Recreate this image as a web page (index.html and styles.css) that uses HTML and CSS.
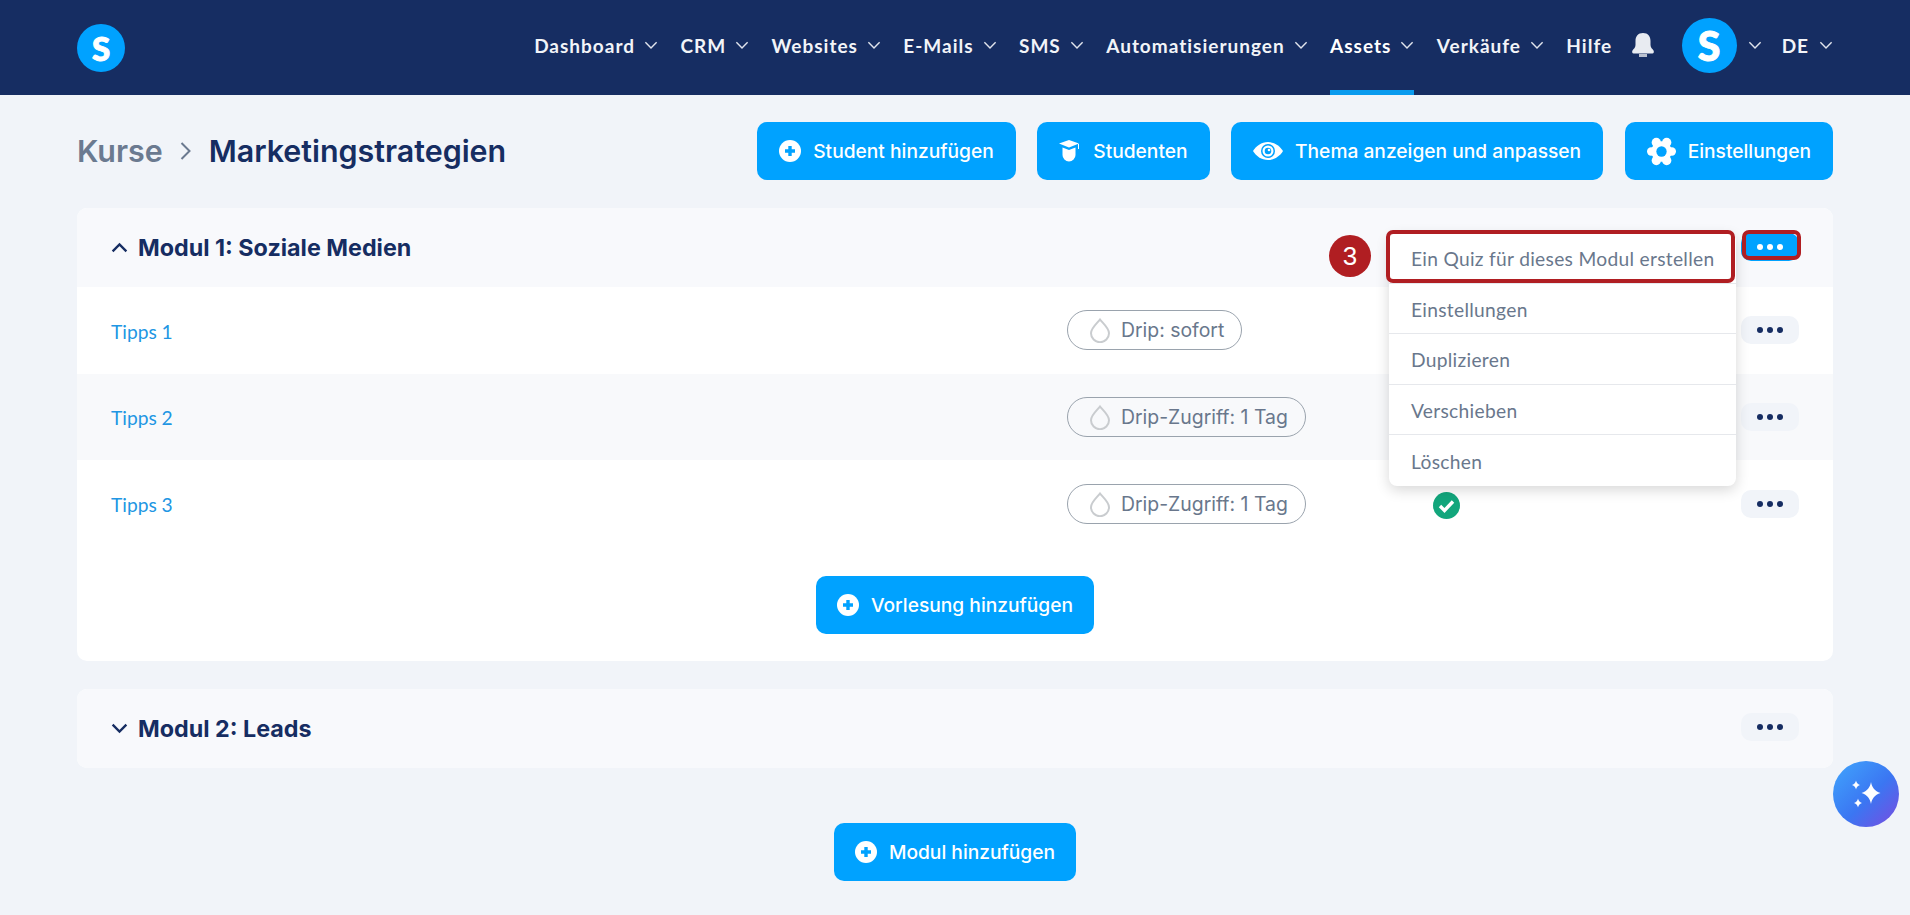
FILE: index.html
```html
<!DOCTYPE html>
<html lang="de">
<head>
    <meta charset="UTF-8">
    <meta name="viewport" content="width=device-width, initial-scale=1.0">
    <title>Marketingstrategien</title>
    <link rel="stylesheet" href="styles.css">
</head>
<body>
    <svg class="sprites" width="0" height="0">
        <symbol id="plus" viewBox="0 0 22 22">
            <circle cx="11" cy="11" r="11" fill="#fff"/>
            <path d="M11 6v10M6 11h10" stroke="#00a2ff" stroke-width="3.4"/>
        </symbol>
        <symbol id="chev" viewBox="0 0 12 8">
            <path d="M1 1.2l5 5 5-5" fill="none" stroke="currentColor"/>
        </symbol>
        <symbol id="drop" viewBox="0 0 24 26">
            <path d="M12 2.5C9 6.5 3 11 3 16.2a9 9 0 0 0 18 0C21 11 15 6.5 12 2.5z" fill="none" stroke="#c9cccf" stroke-width="2"/>
        </symbol>
    </svg>

    <header class="topbar">
        <div class="logo">S</div>
        <nav class="nav">
            <a class="nav-item">Dashboard <svg class="chev"><use href="#chev"/></svg></a>
            <a class="nav-item">CRM <svg class="chev"><use href="#chev"/></svg></a>
            <a class="nav-item">Websites <svg class="chev"><use href="#chev"/></svg></a>
            <a class="nav-item">E-Mails <svg class="chev"><use href="#chev"/></svg></a>
            <a class="nav-item">SMS <svg class="chev"><use href="#chev"/></svg></a>
            <a class="nav-item">Automatisierungen <svg class="chev"><use href="#chev"/></svg></a>
            <a class="nav-item active">Assets <svg class="chev"><use href="#chev"/></svg></a>
            <a class="nav-item">Verkäufe <svg class="chev"><use href="#chev"/></svg></a>
            <a class="nav-item hilfe">Hilfe</a>
            <svg class="bell" viewBox="0 0 22 24">
                <path d="M11 0c5 0 7.500 3.500 7.500 8v4c0 2.500 2 4 3 5.500.6 1 .5 3-1 3H1.500c-1.500 0-1.600-2-1-3C1.500 16 3.500 14.500 3.500 12V8C3.500 3.500 6 0 11 0z" fill="#e8ebf1"/>
                <rect x="7" y="21" width="8" height="3" fill="#b9c0cf"/>
            </svg>
            <div class="avatar">S</div>
            <svg class="chev avatar-chev"><use href="#chev"/></svg>
            <a class="nav-item lang">DE <svg class="chev"><use href="#chev"/></svg></a>
        </nav>
    </header>

    <main class="page">
        <div class="title-row">
            <h1 class="crumbs">
                <span class="crumb-link">Kurse</span>
                <svg class="crumb-sep" viewBox="0 0 12 20"><path d="M1.500 2l8 8-8 8" fill="none" stroke="#6b7a90" stroke-width="2"/></svg>
                <span>Marketingstrategien</span>
            </h1>
            <div class="actions">
                <button class="btn"><svg class="ico"><use href="#plus"/></svg>Student hinzufügen</button>
                <button class="btn">
                    <svg class="ico" viewBox="0 0 22 22">
                        <path d="M10 0l10 3.500-10 4-10-4z" fill="#fff"/>
                        <path d="M19.500 4v5" stroke="#fff" stroke-width="1"/>
                        <path d="M3.500 7.500l6.500 2.500 6.500-2.500v7.500a6.500 6.500 0 0 1-13 0z" fill="#fff"/>
                    </svg>Studenten
                </button>
                <button class="btn">
                    <svg class="ico ico-eye" viewBox="0 0 30 18">
                        <path d="M15 0c6.500 0 12 4 15 9-3 5-8.500 9-15 9S3 14 0 9C3 4 8.500 0 15 0z" fill="#fff"/>
                        <circle cx="15" cy="9" r="7" fill="#00a2ff"/>
                        <circle cx="15" cy="9" r="5.500" fill="#fff"/>
                        <circle cx="15" cy="9" r="3.300" fill="#00a2ff"/>
                        <circle cx="16" cy="8" r="1.300" fill="#fff"/>
                    </svg>Thema anzeigen und anpassen
                </button>
                <button class="btn">
                    <svg class="ico ico-gear" viewBox="0 0 28 28">
                        <g fill="#fff">
                            <circle cx="14" cy="14" r="10"/>
                            <circle cx="24" cy="14" r="4"/>
                            <circle cx="4" cy="14" r="4"/>
                            <circle cx="19" cy="5.300" r="4.500"/>
                            <circle cx="9" cy="5.300" r="4.500"/>
                            <circle cx="19" cy="22.700" r="4.500"/>
                            <circle cx="9" cy="22.700" r="4.500"/>
                        </g>
                        <circle cx="14" cy="14" r="5" fill="#00a2ff"/>
                    </svg>Einstellungen
                </button>
            </div>
        </div>

        <section class="module">
            <div class="module-head">
                <div class="module-title"><svg class="head-chev up"><use href="#chev"/></svg>Modul 1: Soziale Medien</div>
                <button class="dots dots-on"><i></i><i></i><i></i></button>
            </div>
            <div class="row">
                <a class="lesson">Tipps 1</a>
                <div class="status"><span class="pill"><svg class="drop"><use href="#drop"/></svg>Drip: sofort</span></div>
                <span></span>
                <button class="dots"><i></i><i></i><i></i></button>
            </div>
            <div class="row row-alt">
                <a class="lesson">Tipps 2</a>
                <div class="status"><span class="pill"><svg class="drop"><use href="#drop"/></svg>Drip-Zugriff: 1 Tag</span></div>
                <span></span>
                <button class="dots"><i></i><i></i><i></i></button>
            </div>
            <div class="row">
                <a class="lesson">Tipps 3</a>
                <div class="status"><span class="pill"><svg class="drop"><use href="#drop"/></svg>Drip-Zugriff: 1 Tag</span></div>
                <svg class="check" viewBox="0 0 27 27">
                    <circle cx="13.500" cy="13.500" r="13.500" fill="#12a67c"/>
                    <path d="M7 14l4.500 4.500L20 9.500" fill="none" stroke="#fff" stroke-width="3.400"/>
                </svg>
                <button class="dots"><i></i><i></i><i></i></button>
            </div>
            <div class="module-foot">
                <button class="btn btn-add"><svg class="ico"><use href="#plus"/></svg>Vorlesung hinzufügen</button>
            </div>

            <div class="step">3</div>
            <ul class="menu">
                <li>Ein Quiz für dieses Modul erstellen</li>
                <li>Einstellungen</li>
                <li>Duplizieren</li>
                <li>Verschieben</li>
                <li>Löschen</li>
            </ul>
            <div class="mark mark-item"></div>
            <div class="mark mark-dots"></div>
        </section>

        <section class="module">
            <div class="module-head">
                <div class="module-title"><svg class="head-chev"><use href="#chev"/></svg>Modul 2: Leads</div>
                <button class="dots head-dots"><i></i><i></i><i></i></button>
            </div>
        </section>

        <div class="add-row">
            <button class="btn btn-add"><svg class="ico"><use href="#plus"/></svg>Modul hinzufügen</button>
        </div>
    </main>

    <button class="ai">
        <svg viewBox="0 0 32 32" width="32" height="32">
            <path d="M21 4c1 5.500 3.500 9 9.500 11-6 2-8.500 5.500-9.500 11-1-5.500-3.500-9-9.500-11 6-2 8.500-5.500 9.500-11z" fill="#fff"/>
            <path d="M6 2.500c.5 2.500 1.500 3.500 4 4.500-2.500 1-3.500 2-4 4.500-.5-2.500-1.500-3.500-4-4.500 2.500-1 3.500-2 4-4.500z" fill="#fff"/>
            <path d="M8 20.500c.5 2.500 1.500 3.500 4 4.500-2.500 1-3.500 2-4 4.500-.5-2.500-1.500-3.500-4-4.500 2.500-1 3.500-2 4-4.500z" fill="#fff"/>
        </svg>
    </button>
</body>
</html>
```

FILE: styles.css
```css
*{
    box-sizing: border-box;
}
body{
    margin: 0;
    background-color: #f1f4f9;
    color: #162d62;
    font-family: "Inter", sans-serif;
    overflow: hidden;
}
.sprites{
    position: absolute;
}

/* top bar */
.topbar{
    height: 95px;
    background-color: #162d62;
    padding: 0 77px;
    display: flex;
    justify-content: space-between;
    align-items: center;
}
.logo,
.avatar{
    border-radius: 50%;
    background-color: #00a2ff;
    color: white;
    display: flex;
    justify-content: center;
    align-items: center;
    font-family: "Lato", sans-serif;
    font-weight: 900;
}
.logo{
    width: 48px;
    height: 48px;
    font-size: 33px;
    -webkit-text-stroke: 1px white;
}
.avatar{
    width: 55px;
    height: 55px;
    font-size: 41px;
    -webkit-text-stroke: 1px white;
    margin-left: 28px;
    margin-bottom: 5px;
}
.nav{
    display: flex;
    align-items: center;
    height: 95px;
}
.nav-item{
    height: 95px;
    padding-bottom: 5px;
    display: flex;
    align-items: center;
    gap: 9px;
    margin-right: 22.400px;
    color: #f2f4f8;
    font-family: "Lato", sans-serif;
    font-size: 19px;
    font-weight: 700;
    letter-spacing: 1px;
    position: relative;
}
.nav-item.active{
    color: white;
}
.nav-item.active::after{
    content: "";
    position: absolute;
    left: 0;
    right: 0;
    bottom: 0;
    height: 5px;
    background-color: #0a9bee;
}
.hilfe{
    margin-right: 19.500px;
}
.chev{
    width: 14px;
    height: 9px;
    color: #dfe3ec;
    stroke-width: 1.3;
}
.avatar-chev{
    margin-left: 11px;
    margin-right: 20px;
    margin-bottom: 5px;
}
.lang{
    margin-right: 0;
    gap: 10px;
}
.bell{
    width: 22px;
    height: 24px;
    margin-bottom: 5px;
}

/* title */
.page{
    padding: 27px 77px 34px;
}
.title-row{
    display: flex;
    justify-content: space-between;
    align-items: center;
    margin-bottom: 28px;
}
.crumbs{
    margin: 0;
    font-size: 30.400px;
    font-weight: 600;
    display: flex;
    align-items: center;
    gap: 16px;
}
.crumb-link{
    color: #6b7a90;
}
.crumb-sep{
    width: 14px;
    height: 20px;
}
.actions{
    display: flex;
    gap: 21.500px;
}
.btn{
    height: 58px;
    padding: 0 22px;
    border: none;
    border-radius: 10px;
    background-color: #00a2ff;
    color: white;
    font-family: "Inter", sans-serif;
    font-size: 19.200px;
    font-weight: 500;
    display: flex;
    align-items: center;
    gap: 12px;
}
.btn-add{
    padding: 0 20.500px;
}
.ico{
    width: 22px;
    height: 22px;
}
.ico-eye{
    width: 30px;
    height: 18px;
}
.ico-gear{
    width: 29px;
    height: 29px;
}

/* modules */
.module{
    position: relative;
    background-color: white;
    border-radius: 10px;
    margin-bottom: 28px;
}
.module-head{
    height: 79px;
    background-color: #f8f9fc;
    border-radius: 10px;
    padding: 0 34px;
    display: flex;
    justify-content: space-between;
    align-items: center;
}
.module:first-of-type .module-head{
    border-radius: 10px 10px 0 0;
}
.module-title{
    font-size: 23.300px;
    font-weight: 700;
    display: flex;
    align-items: center;
    gap: 10px;
}
.head-chev{
    width: 17px;
    height: 11px;
    color: #162d62;
    stroke-width: 1.7;
}
.head-chev.up{
    transform: rotate(180deg);
}
.row{
    height: 86.670px;
    padding: 0 34px;
    display: grid;
    grid-template-columns: 956px 366px 1fr auto;
    align-items: center;
}
.row-alt{
    background-color: #f8f9fb;
}
.lesson{
    margin-top: 2px;
    color: #2196e3;
    font-family: "Lato", sans-serif;
    font-size: 19.200px;
}
.pill{
    height: 40px;
    display: inline-flex;
    align-items: center;
    gap: 9px;
    padding: 0 17px 0 20px;
    border: 1px solid #9aa3ad;
    border-radius: 20px;
    color: #69778c;
    font-size: 19.400px;
}
.drop{
    width: 24px;
    height: 26px;
}
.check{
    width: 27px;
    height: 27px;
    margin-top: 3px;
}
.dots{
    width: 58px;
    height: 28px;
    padding: 0;
    border: none;
    border-radius: 10px;
    background-color: #f1f4f9;
    display: flex;
    justify-content: center;
    align-items: center;
    gap: 4px;
}
.dots i{
    width: 6px;
    height: 6px;
    border-radius: 50%;
    background-color: #162d62;
}
.dots-on{
    background-color: #00a2ff;
    margin-bottom: 2px;
}
.head-dots{
    margin-bottom: 2px;
}
.dots-on i{
    background-color: white;
}
.module-foot{
    padding: 29px 0 27px;
    display: flex;
    justify-content: center;
}
.add-row{
    margin-top: 55px;
    display: flex;
    justify-content: center;
}

/* open menu and annotations */
.menu{
    position: absolute;
    left: 1312px;
    top: 25px;
    width: 347px;
    margin: 0;
    padding: 0;
    list-style: none;
    background-color: white;
    border-radius: 8px;
    box-shadow: 0 4px 14px rgba(0, 0, 0, 0.16);
    color: #69778c;
    font-family: "Lato", sans-serif;
    font-size: 19.200px;
    letter-spacing: 0.3px;
    white-space: nowrap;
}
.menu li{
    height: 50.500px;
    padding: 2px 0 0 22px;
    display: flex;
    align-items: center;
    border-bottom: 1px solid #e6e8ec;
}
.menu li:last-child{
    border-bottom: none;
}
.mark{
    position: absolute;
    border: 4px solid #b01e22;
    border-radius: 7px;
}
.mark-item{
    left: 1309px;
    top: 22px;
    width: 349px;
    height: 53px;
}
.mark-dots{
    left: 1665px;
    top: 22px;
    width: 59px;
    height: 30px;
}
.step{
    position: absolute;
    left: 1252px;
    top: 27px;
    width: 42px;
    height: 42px;
    border-radius: 50%;
    background-color: #b01e22;
    color: white;
    font-family: "Liberation Sans", sans-serif;
    font-size: 26px;
    display: flex;
    justify-content: center;
    align-items: center;
}
.ai{
    position: absolute;
    left: 1833px;
    top: 761px;
    width: 66px;
    height: 66px;
    padding: 0;
    border: none;
    border-radius: 50%;
    background: linear-gradient(135deg, #3f9dfb 10%, #3b76f2 55%, #7a4be0 100%);
    display: flex;
    justify-content: center;
    align-items: center;
}
```
